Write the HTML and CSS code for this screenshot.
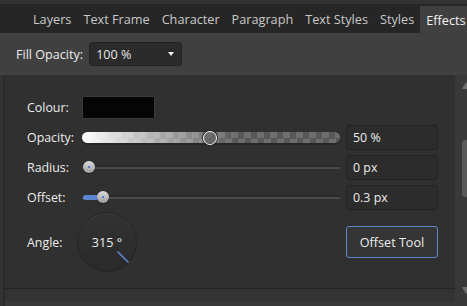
FILE: index.html
```html
<!DOCTYPE html>
<html lang="en">
<head>
  <meta charset="UTF-8">
  <title>Effects</title>
  <link rel="stylesheet" href="styles.css">
</head>
<body>
<div class="app">
  <div class="tabbar">
    <span class="grip"></span>
    <span class="tab">Layers</span>
    <span class="tab">Text Frame</span>
    <span class="tab">Character</span>
    <span class="tab">Paragraph</span>
    <span class="tab">Text Styles</span>
    <span class="tab">Styles</span>
    <span class="tab active">Effects</span>
  </div>

  <div class="toolbar">
    <span class="label">Fill Opacity:</span>
    <div class="select">
      <span>100 %</span>
      <span class="caret"></span>
    </div>
  </div>

  <div class="body">
    <div class="panel">
      <div class="grid">
        <span class="label">Colour:</span>
        <div class="cell"><div class="swatch"></div></div>
        <span></span>

        <span class="label">Opacity:</span>
        <div class="slider">
          <div class="alpha-track"></div>
          <div class="ring-knob" style="left: 121px"></div>
        </div>
        <div class="field">50 %</div>

        <span class="label">Radius:</span>
        <div class="slider">
          <div class="track"></div>
          <div class="knob" style="left: 1px"></div>
        </div>
        <div class="field">0 px</div>

        <span class="label">Offset:</span>
        <div class="slider">
          <div class="track"></div>
          <div class="fill" style="width: 20px"></div>
          <div class="knob" style="left: 15px"></div>
        </div>
        <div class="field">0.3 px</div>

        <span class="label">Angle:</span>
        <div class="cell">
          <div class="dial">
            <span>315 °</span>
            <svg class="needle" width="60" height="60" viewBox="0 0 60 60">
              <line x1="41" y1="40" x2="51" y2="50" stroke="#5b86cf" stroke-width="1.6" stroke-linecap="round"/>
            </svg>
          </div>
        </div>
        <div class="cell"><button class="btn">Offset Tool</button></div>
      </div>
      <div class="panel-foot"></div>
    </div>
    <div class="scrollbar">
      <span class="arrow up"></span>
      <span class="thumb"></span>
      <span class="arrow down"></span>
    </div>
  </div>
</div>
</body>
</html>
```

FILE: styles.css
```css
html, body {
  margin: 0;
  padding: 0;
  background: #333333;
}
body {
  font-family: "Open Sans", "Noto Sans", sans-serif;
  font-size: 12px;
  color: #e6e6e6;
}
.app {
  width: 467px;
  height: 306px;
  display: flex;
  flex-direction: column;
  background: #333333;
  overflow: hidden;
}

/* tabs */
.tabbar {
  margin-top: 4px;
  height: 29px;
  background: #262626;
  display: flex;
  align-items: stretch;
  padding-left: 14px;
  white-space: nowrap;
}
.grip {
  width: 1px;
  height: 10px;
  background: #555555;
  align-self: center;
  margin-right: 13px;
}
.tab {
  display: flex;
  align-items: center;
  padding: 0 6px;
  color: #c9c9c9;
  font-size: 12.7px;
}
.tab.active {
  margin-top: 2px;
  padding: 0 6px;
  background: #404040;
  color: #f2f2f2;
}

/* toolbar */
.toolbar {
  height: 42px;
  background: #404040;
  display: flex;
  align-items: center;
  padding-left: 16px;
  gap: 6px;
}
.toolbar .label {
  color: #ececec;
  font-size: 12.6px;
}
.select {
  width: 93px;
  height: 24px;
  box-sizing: border-box;
  background: #2b2b2b;
  border: 1px solid #232323;
  border-radius: 3px;
  display: flex;
  align-items: center;
  justify-content: space-between;
  padding: 0 7px 0 6px;
  font-size: 12.6px;
}
.caret {
  width: 0;
  height: 0;
  border-left: 3.5px solid transparent;
  border-right: 3.5px solid transparent;
  border-top: 4px solid #f0f0f0;
}

/* main */
.body {
  flex: 1;
  display: flex;
}
.panel {
  flex: 1;
  margin-left: 3px;
  border-left: 2px solid #2a2a2a;
  display: flex;
  flex-direction: column;
}
.grid {
  height: 196px;
  background: #303030;
  padding: 17px 0 0 22px;
  display: grid;
  grid-template-columns: 49px 258px 92px;
  grid-template-rows: 30px 30px 30px 30px 60px;
  column-gap: 6px;
  align-items: center;
}
.label {
  font-size: 12.4px;
  color: #ececec;
  white-space: nowrap;
}
.cell {
  display: flex;
  align-items: center;
}
.swatch {
  width: 73px;
  height: 23px;
  box-sizing: border-box;
  background: #050505;
  border: 1px solid #3a3a3a;
  border-radius: 2px;
}
.field {
  height: 25px;
  box-sizing: border-box;
  background: #2c2c2c;
  border: 1px solid #232323;
  border-radius: 3px;
  display: flex;
  align-items: center;
  padding-left: 6px;
  font-size: 12.4px;
  color: #ececec;
}

/* sliders */
.slider {
  position: relative;
  height: 30px;
  display: flex;
  align-items: center;
}
.alpha-track {
  width: 100%;
  height: 11px;
  border-radius: 6px;
  background:
    linear-gradient(to right, rgba(255,255,255,1) 0%, rgba(255,255,255,0) 60%),
    repeating-conic-gradient(#6e6e6e 0 25%, #585858 0 50%) 0 0 / 13px 13px;
  box-shadow: 0 2px 0 #262626;
}
.ring-knob {
  position: absolute;
  top: 9px;
  width: 12px;
  height: 12px;
  border-radius: 50%;
  border: 1.5px solid #f4f4f4;
  background: rgba(90,90,90,0.6);
  box-shadow: 0 0 0 1px #2a2a2a;
}
.track {
  width: 100%;
  height: 2px;
  margin-top: 2px;
  border-radius: 1px;
  background: #4b4b4b;
  box-shadow: 0 -2px 0 #2a2a2a;
}
.fill {
  position: absolute;
  left: 1px;
  top: 13px;
  height: 5px;
  border-radius: 3px 0 0 3px;
  background: #5b86cf;
}
.knob {
  position: absolute;
  top: 9px;
  width: 12px;
  height: 12px;
  border-radius: 50%;
  background: radial-gradient(circle at 50% 50%, #4f82d6 0 1px, transparent 1.5px),
    linear-gradient(#dcdcdc, #9c9c9c);
  box-shadow: 0 1px 1px #1e1e1e;
}

/* angle dial */
.dial {
  position: relative;
  width: 60px;
  height: 60px;
  box-sizing: border-box;
  margin-left: -5px;
  border-radius: 50%;
  background: linear-gradient(#323232, #2a2a2a);
  border: 1px solid #242424;
  box-shadow: inset 0 1px 0 #3a3a3a;
  display: flex;
  align-items: center;
  justify-content: center;
  font-size: 12.6px;
  color: #ececec;
}
.needle {
  position: absolute;
  left: -1px;
  top: -1px;
}
.btn {
  width: 92px;
  height: 32px;
  background: #353535;
  border: 1px solid #5a86cc;
  border-radius: 3px;
  color: #ececec;
  font-family: inherit;
  font-size: 12.6px;
  padding: 0;
}

.panel-foot {
  height: 13px;
  border-top: 1px solid #252525;
  border-bottom: 4px solid #393939;
  background: #333333;
}

/* scrollbar */
.scrollbar {
  width: 12px;
  background: #393939;
  position: relative;
  overflow: hidden;
}
.thumb {
  position: absolute;
  left: 7px;
  top: 65px;
  width: 8px;
  height: 57px;
  border-radius: 3px;
  background: #5a5a5a;
}
.arrow {
  position: absolute;
  left: 7px;
  width: 0;
  height: 0;
  border-left: 4px solid transparent;
  border-right: 4px solid transparent;
}
.arrow.up {
  top: 7px;
  border-bottom: 7px solid #6e6e6e;
}
.arrow.down {
  top: 212px;
  border-top: 7px solid #6e6e6e;
}
```
